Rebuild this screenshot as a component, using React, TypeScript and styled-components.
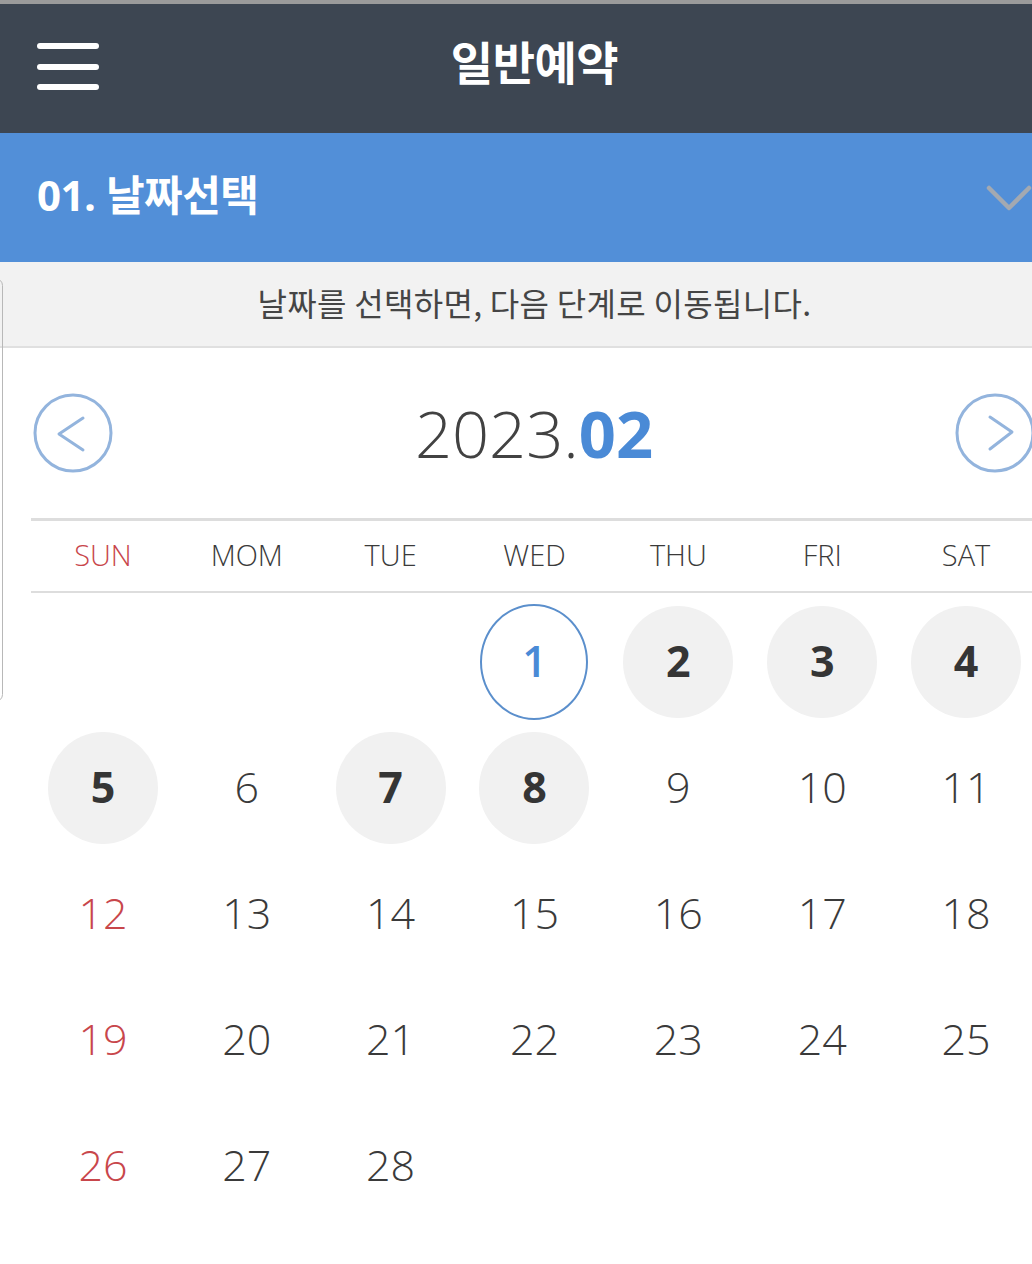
import React from "react";
import styled, { createGlobalStyle, css } from "styled-components";

const GlobalStyle = createGlobalStyle`
  html, body {
    margin: 0;
    padding: 0;
    background: #ffffff;
    overflow: hidden;
  }
  body {
    font-family: "Open Sans", "Noto Sans CJK KR", sans-serif;
  }
`;

const Page = styled.div`
  position: relative;
  width: 1069px;
  height: 1264px;
  background: #ffffff;
  overflow: hidden;
`;

const TopStrip = styled.div`
  height: 4px;
  background: #9b9b9b;
`;

const Header = styled.header`
  height: 129px;
  background: #3d4652;
  display: grid;
  grid-template-columns: 1fr auto 1fr;
  align-items: center;
  padding: 0 37px;
`;

const Hamburger = styled.button`
  justify-self: start;
  width: 62px;
  height: 47px;
  padding: 0;
  border: none;
  background: transparent;
  display: flex;
  flex-direction: column;
  justify-content: space-between;
  cursor: pointer;
  margin-bottom: 4px;
`;

const HamburgerLine = styled.span`
  display: block;
  width: 62px;
  height: 6px;
  border-radius: 3px;
  background: #ffffff;
`;

const HeaderTitle = styled.h1`
  margin: 0 0 18px;
  font-family: "Noto Sans CJK KR", sans-serif;
  font-weight: 700;
  font-size: 46px;
  line-height: 1;
  color: #ffffff;
  letter-spacing: -0.5px;
`;

const StepBar = styled.div`
  height: 129px;
  background: #528fd8;
  display: flex;
  align-items: center;
  justify-content: space-between;
  padding: 0 37px;
`;

const StepTitle = styled.h2`
  margin: 0 0 6px;
  font-family: "Open Sans", "Noto Sans CJK KR", sans-serif;
  font-weight: 700;
  font-size: 42px;
  line-height: 1;
  color: #ffffff;
  letter-spacing: -0.5px;
`;

const Notice = styled.div`
  height: 86px;
  background: #f2f2f2;
  border-bottom: 2px solid #e0e0e0;
  display: flex;
  align-items: center;
  justify-content: center;
  font-family: "Noto Sans CJK KR", sans-serif;
  font-size: 32px;
  font-weight: 400;
  color: #454545;
  letter-spacing: 0.3px;
  padding-bottom: 4px;
  box-sizing: border-box;
`;

const SideSliver = styled.div`
  position: absolute;
  left: -12px;
  top: 278px;
  width: 13px;
  height: 422px;
  border: 1.5px solid #b8b8b8;
  border-radius: 8px;
  background: transparent;
`;

const Calendar = styled.section`
  padding: 0 31px;
`;

const NavRow = styled.div`
  height: 170px;
  display: flex;
  align-items: center;
  justify-content: space-between;
  padding: 0 3px 0 2px;
`;

const NavButton = styled.button`
  width: 80px;
  height: 80px;
  padding: 0;
  border: none;
  background: transparent;
  cursor: pointer;
`;

const MonthTitle = styled.div`
  font-family: "Open Sans", sans-serif;
  font-size: 65px;
  color: #424242;
  font-weight: 300;
  line-height: 1;
`;

const MonthNum = styled.span`
  color: #4a8ad6;
  font-weight: 700;
`;

const WeekHeader = styled.div`
  display: grid;
  grid-template-columns: repeat(7, 1fr);
  height: 75px;
  box-sizing: border-box;
  align-items: center;
  border-top: 3px solid #dddddd;
  border-bottom: 2px solid #dddddd;
  padding-bottom: 4px;
`;

const WeekDay = styled.div<{ $sun?: boolean }>`
  text-align: center;
  font-family: "Open Sans", sans-serif;
  font-size: 29px;
  font-weight: 300;
  color: ${(p) => (p.$sun ? "#c8464b" : "#3a3a3a")};
`;

const DaysGrid = styled.div`
  display: grid;
  grid-template-columns: repeat(7, 1fr);
  grid-auto-rows: 126px;
  padding-top: 6px;
`;

const DayCell = styled.div`
  display: flex;
  align-items: center;
  justify-content: center;
`;

type Variant = "plain" | "open" | "today";

const DayCircle = styled.div<{ $variant: Variant; $sun?: boolean }>`
  width: 110px;
  height: 112px;
  border-radius: 50%;
  display: flex;
  align-items: center;
  justify-content: center;
  box-sizing: border-box;
  font-family: "Open Sans", sans-serif;
  font-size: 43px;
  font-weight: 300;
  color: ${(p) => (p.$sun ? "#c8464b" : "#3a3a3a")};
  padding-bottom: 4px;
  ${(p) =>
    p.$variant === "open" &&
    css`
      background: #f1f1f1;
      font-weight: 700;
      color: #353535;
    `}
  ${(p) =>
    p.$variant === "today" &&
    css`
      width: 108px;
      height: 116px;
      border: 2px solid #5b8fcc;
      color: #4a8ad6;
      font-weight: 600;
    `}
`;

const ArrowIcon: React.FC<{ dir: "left" | "right" }> = ({ dir }) => (
  <svg width="80" height="80" viewBox="0 0 80 80" fill="none">
    <circle cx="40" cy="40" r="38" stroke="#93b4dd" strokeWidth="3" />
    <polyline
      points={dir === "left" ? "50,25 26,41 50,57" : "35,24 57,39 35,56"}
      stroke="#93b4dd"
      strokeWidth="3"
      strokeLinecap="round"
      strokeLinejoin="round"
    />
  </svg>
);

const ChevronDown: React.FC = () => (
  <svg width="46" height="28" viewBox="0 0 46 28" fill="none">
    <polyline
      points="3,4 23,24 43,4"
      stroke="#a3a9b1"
      strokeWidth="4.5"
      strokeLinecap="round"
      strokeLinejoin="round"
    />
  </svg>
);

const WEEK = ["SUN", "MOM", "TUE", "WED", "THU", "FRI", "SAT"];
const OPEN = new Set([2, 3, 4, 5, 7, 8]);
const TODAY = 1;
const START_OFFSET = 3;
const DAYS_IN_MONTH = 28;

export default function App() {
  const cells: (number | null)[] = [];
  for (let i = 0; i < START_OFFSET; i++) cells.push(null);
  for (let d = 1; d <= DAYS_IN_MONTH; d++) cells.push(d);

  return (
    <>
      <GlobalStyle />
      <Page>
        <TopStrip />
        <Header>
          <Hamburger aria-label="menu">
            <HamburgerLine />
            <HamburgerLine />
            <HamburgerLine />
          </Hamburger>
          <HeaderTitle>일반예약</HeaderTitle>
          <div />
        </Header>
        <StepBar>
          <StepTitle>01. 날짜선택</StepTitle>
          <ChevronDown />
        </StepBar>
        <Notice>날짜를 선택하면, 다음 단계로 이동됩니다.</Notice>
        <Calendar>
          <NavRow>
            <NavButton aria-label="previous month">
              <ArrowIcon dir="left" />
            </NavButton>
            <MonthTitle>
              2023.<MonthNum>02</MonthNum>
            </MonthTitle>
            <NavButton aria-label="next month">
              <ArrowIcon dir="right" />
            </NavButton>
          </NavRow>
          <WeekHeader>
            {WEEK.map((w, i) => (
              <WeekDay key={w} $sun={i === 0}>
                {w}
              </WeekDay>
            ))}
          </WeekHeader>
          <DaysGrid>
            {cells.map((d, i) => (
              <DayCell key={i}>
                {d !== null && (
                  <DayCircle
                    $variant={d === TODAY ? "today" : OPEN.has(d) ? "open" : "plain"}
                    $sun={i % 7 === 0 && !OPEN.has(d)}
                  >
                    {d}
                  </DayCircle>
                )}
              </DayCell>
            ))}
          </DaysGrid>
        </Calendar>
        <SideSliver />
      </Page>
    </>
  );
}
